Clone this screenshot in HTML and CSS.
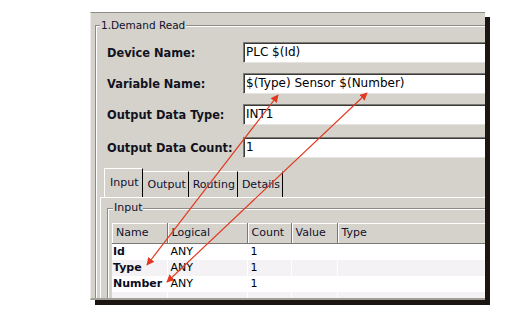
FILE: index.html
```html
<!DOCTYPE html>
<html lang="en">
  <head>
    <meta charset="UTF-8" />
    <title>Demand Read</title>
    <link rel="stylesheet" href="styles.css">
  </head>
  <body>
    <div class="frame">
      <fieldset class="group">
        <legend>1.Demand Read</legend>

        <div class="fields">
          <label>Device Name:</label>
          <div class="input">PLC $(Id)</div>
          <label>Variable Name:</label>
          <div class="input">$(Type) Sensor $(Number)</div>
          <label>Output Data Type:</label>
          <div class="input">INT1</div>
          <label class="last">Output Data Count:</label>
          <div class="input last">1</div>
        </div>

        <div class="tabs">
          <span class="tab active">Input</span>
          <span class="tab">Output</span>
          <span class="tab">Routing</span>
          <span class="tab">Details</span>
        </div>

        <div class="tab-page">
          <fieldset class="group inner">
            <legend>Input</legend>
            <table class="grid">
              <thead>
                <tr>
                  <th class="c-name">Name</th>
                  <th class="c-logical">Logical</th>
                  <th class="c-count">Count</th>
                  <th class="c-value">Value</th>
                  <th>Type</th>
                </tr>
              </thead>
              <tbody>
                <tr><td class="key">Id</td><td>ANY</td><td>1</td><td></td><td></td></tr>
                <tr class="alt"><td class="key">Type</td><td>ANY</td><td>1</td><td></td><td></td></tr>
                <tr><td class="key">Number</td><td>ANY</td><td>1</td><td></td><td></td></tr>
                <tr class="alt"><td></td><td></td><td></td><td></td><td></td></tr>
              </tbody>
            </table>
          </fieldset>
        </div>
      </fieldset>
    </div>

    <!-- annotation arrows drawn over the dialog -->
    <svg class="arrows" width="526" height="316" viewBox="0 0 526 316">
      <defs>
        <marker id="head" viewBox="0 0 10 10" refX="9" refY="5" markerWidth="6.5" markerHeight="6.5" orient="auto-start-reverse">
          <path d="M0 0L10 5L0 10z" fill="#e2381f" />
        </marker>
      </defs>
      <line x1="278" y1="95" x2="147" y2="265" marker-start="url(#head)" marker-end="url(#head)" />
      <line x1="367" y1="93" x2="167" y2="282" marker-start="url(#head)" marker-end="url(#head)" />
    </svg>
  </body>
</html>
```

FILE: styles.css
```css
body {
    margin: 0;
    width: 526px;
    height: 316px;
    position: relative;
    overflow: hidden;
    background: #fff;
    font-family: "DejaVu Sans", Verdana, sans-serif;
    font-size: 11px;
    color: #10102a;
}

.frame {
    box-sizing: border-box;
    width: 395px;
    height: 288px;
    margin: 12px 0 0 90px;
    padding-top: 5px;
    background: #d5d2cc;
    border-top: 1px solid #8f8c86;
    border-left: 1px solid #eeece8;
    border-bottom: 2px solid #a29f98;
    box-shadow: 5px 5px 0 #1c1612;
    overflow: hidden;
}

.group {
    width: 430px;
    margin: 0 0 0 4px;
    padding: 0 0 0 11px;
    border: 1px solid #8e8b84;
    box-shadow: inset 1px 1px 0 #fff;
}

.group legend {
    margin-left: -7px;
    padding: 0 1px;
    line-height: 14px;
    font-size: 10.5px;
    background: #d5d2cc;
}

/* form rows */

.fields {
    display: grid;
    grid-template-columns: 136px 1fr;
    row-gap: 10px;
    align-items: center;
    margin-top: 10px;
}

.fields label {
    font-weight: bold;
    font-size: 11.4px;
    color: #121220;
}

.fields .last {
    margin-top: 2px;
}

.input {
    box-sizing: border-box;
    height: 21px;
    padding-left: 2px;
    line-height: 18px;
    font-size: 12px;
    color: #000;
    background: #fff;
    border: 1px solid;
    border-color: #7c7a75 #fff #e6e4e0 #7c7a75;
    box-shadow: inset 1px 1px 0 #3c3a38;
}

/* tabs */

.tabs {
    display: flex;
    align-items: flex-end;
    height: 29px;
    margin: 10px 0 0 -3px;
}

.tab {
    box-sizing: border-box;
    height: 26px;
    padding: 0 2px 0 4px;
    line-height: 26px;
    border-top: 1px solid #fff;
    border-right: 1px solid #000;
    color: #101030;
}

.tab.active {
    height: 29px;
    padding: 0 4px 0 5px;
    line-height: 28px;
    border-left: 1px solid #fff;
}

.tab-page {
    margin-left: -7px;
    padding: 3px 0 0 6px;
    border-top: 1px solid #fff;
    border-left: 1px solid #fff;
}

.group.inner {
    width: 410px;
    margin: 0;
    padding: 0 0 0 4px;
}

.group.inner legend {
    margin-left: 1px;
    font-size: 11px;
}

/* input table */

.grid {
    width: 400px;
    margin-top: 8px;
    border-collapse: collapse;
    background: #fff;
}

.grid th {
    box-sizing: border-box;
    height: 20px;
    padding: 0 0 0 4px;
    text-align: left;
    font-weight: normal;
    background: #d5d2cc;
    border-right: 1px solid #7a7874;
    border-bottom: 1px solid #7a7874;
    box-shadow: inset 1px 1px 0 #fff;
}

.c-name { width: 55px; }
.c-logical { width: 80px; }
.c-count { width: 44px; }
.c-value { width: 46px; }

.grid td {
    height: 16px;
    padding: 0 0 0 3px;
    line-height: 16px;
    border-right: 1px solid #fff;
    color: #000;
}

.grid td.key {
    padding-left: 1px;
    font-weight: bold;
    color: #0c0c20;
}

.grid tr.alt td {
    background: #f4f2f5;
}

/* arrows */

.arrows {
    position: absolute;
    top: 0;
    left: 0;
    pointer-events: none;
}

.arrows line {
    stroke: #e2381f;
    stroke-width: 1.2;
}
```
